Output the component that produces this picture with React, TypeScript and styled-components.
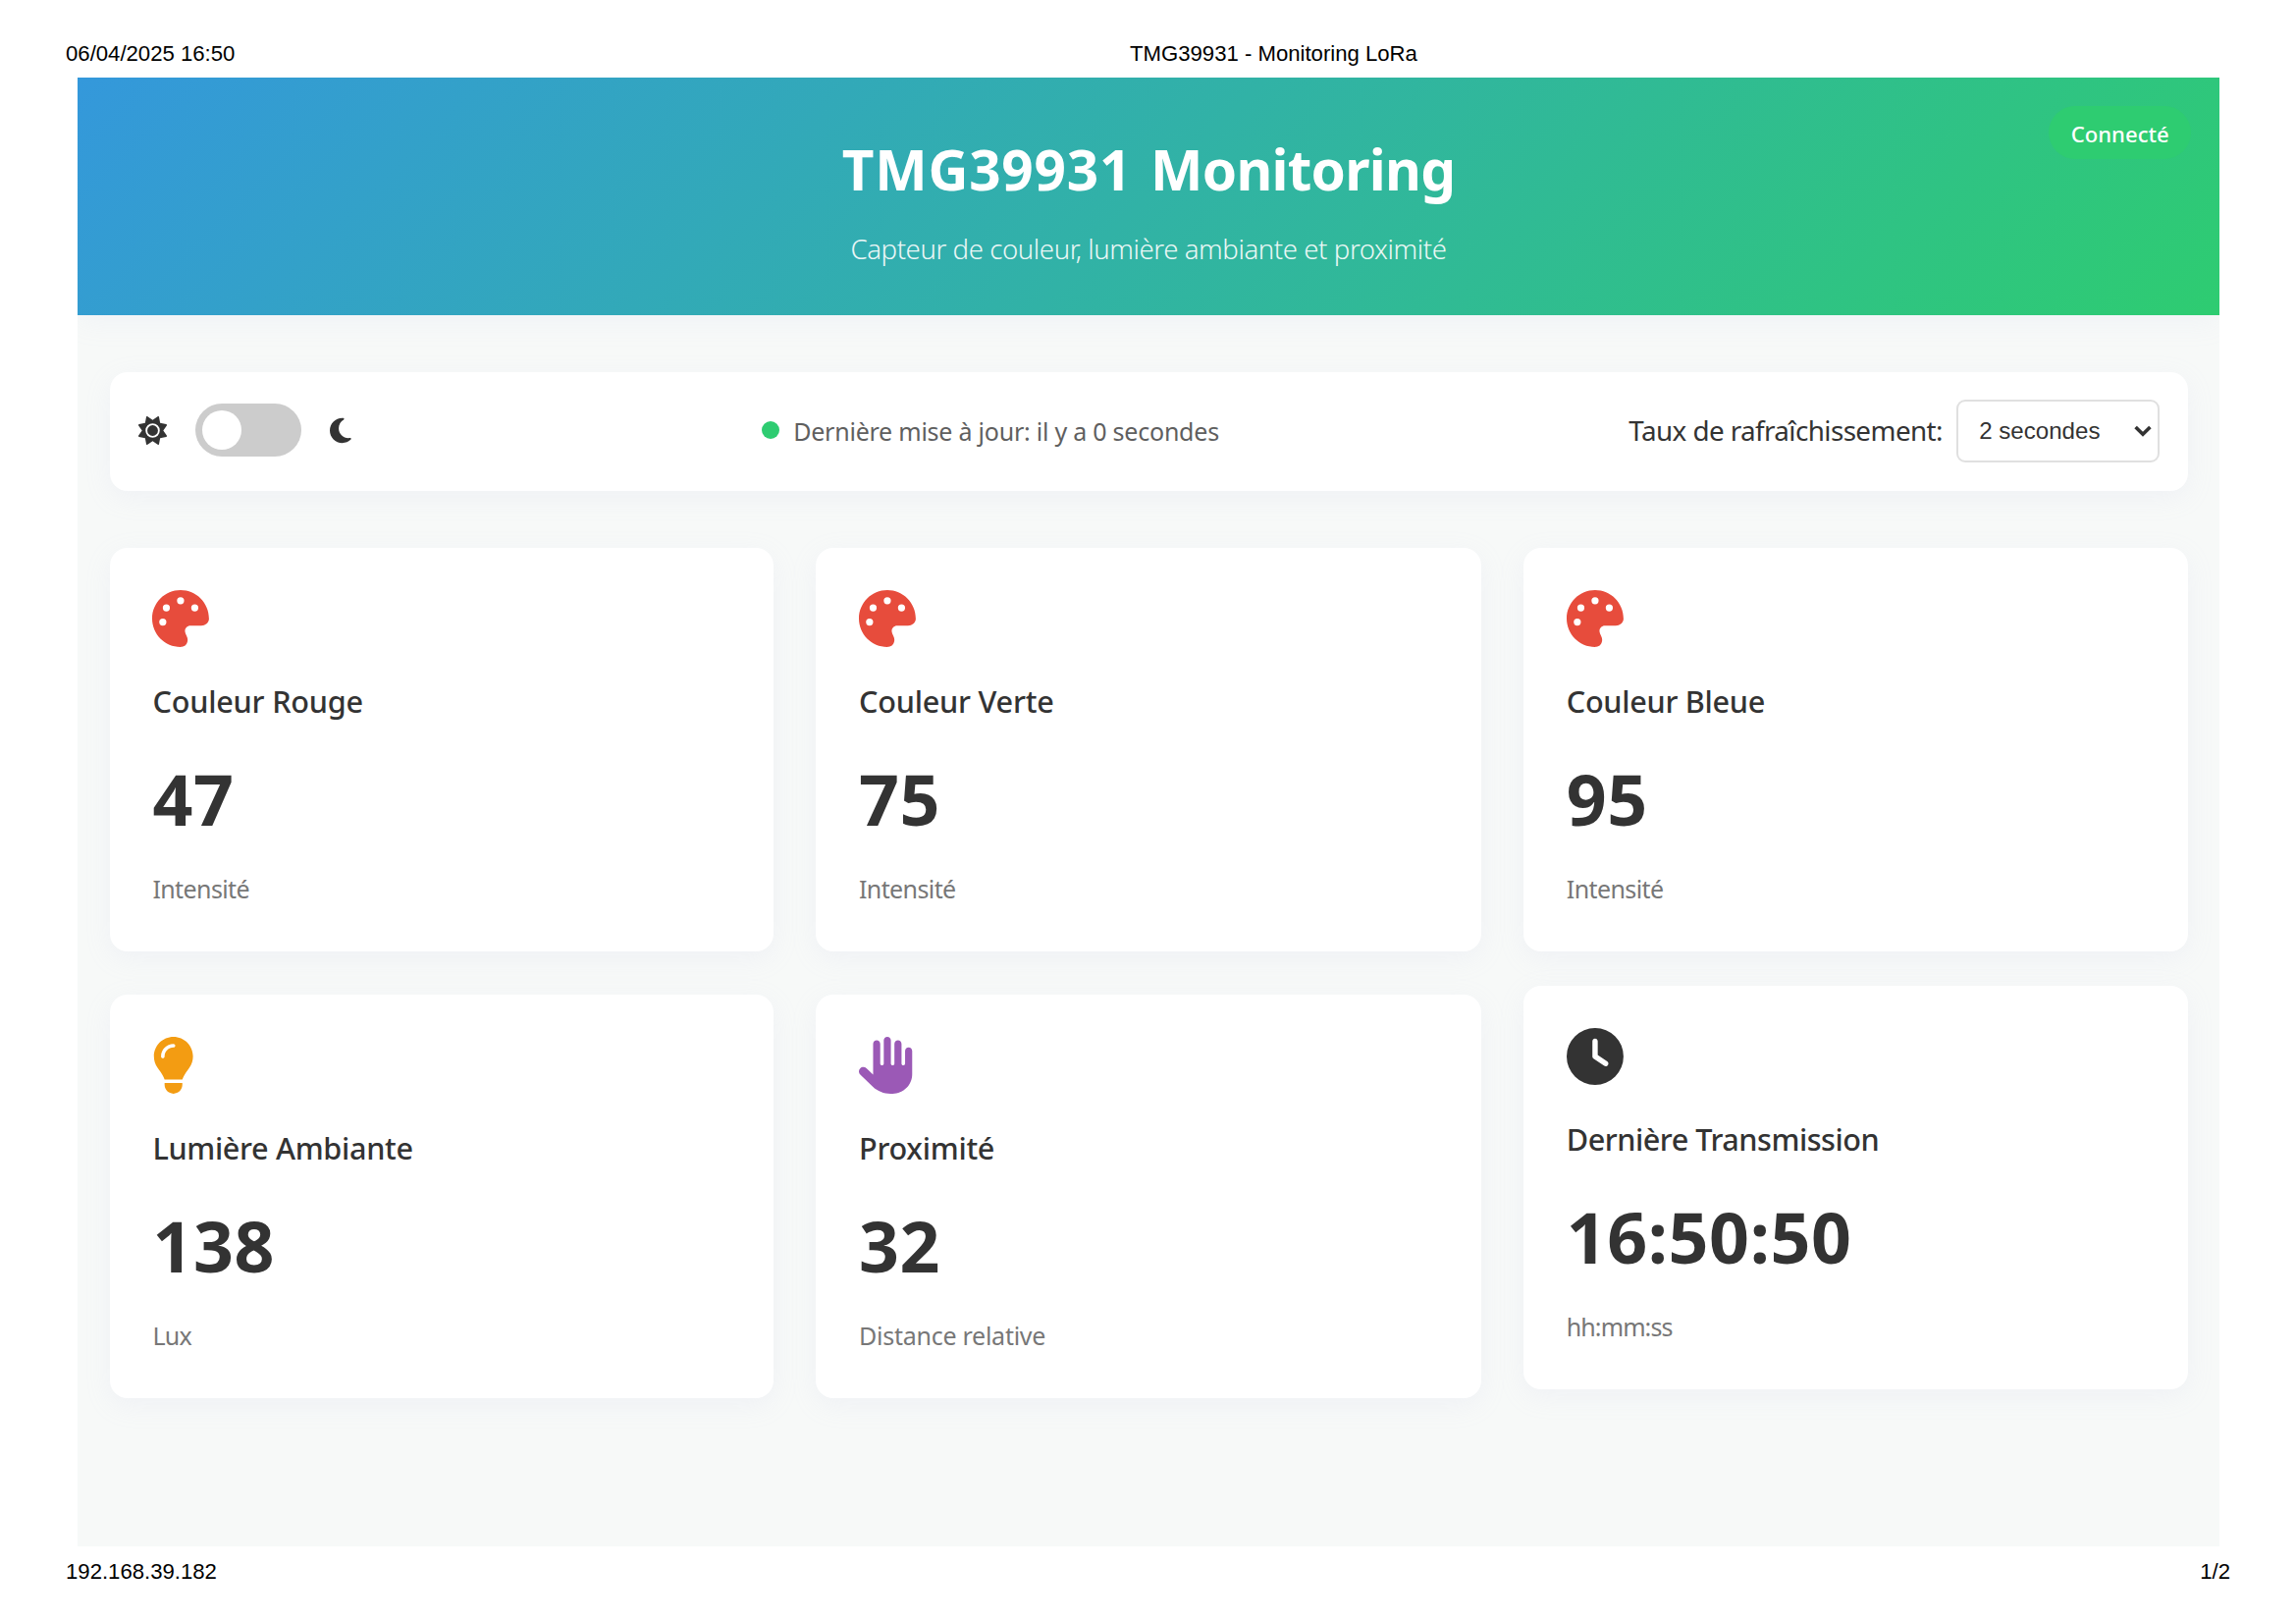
import React from "react";
import styled, { createGlobalStyle } from "styled-components";
import type { IconType } from "react-icons";
import { FaClock, FaHand, FaLightbulb, FaMoon, FaPalette, FaSun } from "react-icons/fa6";

const GlobalStyle = createGlobalStyle`
  *, *::before, *::after { box-sizing: border-box; }
  body {
    margin: 0;
    background: #fff;
    color: #333;
    font-family: "Noto Sans", "Open Sans", sans-serif;
  }
`;

const Sheet = styled.div`
  width: 2339px;
  height: 1653px;
  overflow: hidden;
  display: flex;
  flex-direction: column;
`;

const SheetHeader = styled.div`
  height: 79px;
  padding: 42px 67px 0;
  display: grid;
  grid-template-columns: 1084px auto;
  color: #000;
  font: 22.15px/26px "Liberation Sans", Arial, sans-serif;
`;

const SheetFooter = styled.div`
  padding: 13px 67px 0 67px;
  display: flex;
  justify-content: space-between;
  color: #000;
  font: 22.15px/26px "Liberation Sans", Arial, sans-serif;
`;

const Page = styled.div`
  width: 2182px;
  height: 1496px;
  margin-left: 79px;
  background: #f7f9f8;
  overflow: hidden;
`;

const Banner = styled.header`
  position: relative;
  height: 242px;
  padding-top: 53px;
  text-align: center;
  color: #fff;
  background: linear-gradient(135deg, #3498db, #2ecc71);
  box-shadow: 0 7px 27px rgba(190, 196, 232, 0.1);
`;

const BannerTitle = styled.h1`
  margin: 0 0 18.6px;
  font-size: 56.7px;
  font-weight: 700;
  line-height: 80px;
  letter-spacing: 0.75px;
  word-spacing: 3.5px;
`;

const TitleTail = styled.span`
  letter-spacing: -0.75px;
`;

const BannerSubtitle = styled.p`
  margin: 0;
  font-size: 27.6px;
  font-weight: 300;
  line-height: 44px;
  letter-spacing: -0.43px;
  opacity: 0.9;
`;

const ConnectionBadge = styled.div`
  position: absolute;
  top: 29px;
  right: 29px;
  width: 144.6px;
  height: 54.3px;
  padding-top: 1px;
  display: flex;
  align-items: center;
  justify-content: center;
  border-radius: 36px;
  background: #2ecc71;
  font-size: 22.1px;
  font-weight: 500;
`;

const Container = styled.main`
  padding: 57.5px 32.2px 0 32.8px;
`;

const surface = `
  background: #fff;
  border-radius: 18px;
  box-shadow: 0 7px 27px rgba(190, 196, 232, 0.13);
`;

const ControlBar = styled.section`
  ${surface}
  height: 121px;
  margin-bottom: 58.4px;
  padding: 0 29px;
  display: flex;
  align-items: center;
  justify-content: space-between;
`;

const ThemeControl = styled.div`
  display: flex;
  align-items: center;
  gap: 29px;
  margin-bottom: 1.4px;
  font-size: 29px;
`;

const MoonIcon = styled(FaMoon)`
  width: 0.75em;
`;

const Switch = styled.button`
  width: 108.6px;
  height: 54.3px;
  padding: 7.2px;
  border: 0;
  border-radius: 62px;
  background: #ccc;
`;

const Knob = styled.span`
  display: block;
  width: 39.9px;
  height: 39.9px;
  border-radius: 50%;
  background: #fff;
`;

const UpdateStatus = styled.div`
  display: flex;
  align-items: center;
  gap: 14.5px;
  color: #5f5f5f;
  font-size: 25px;
  letter-spacing: -0.23px;
`;

const StatusDot = styled.span`
  width: 18.1px;
  height: 18.1px;
  margin-bottom: 2px;
  border-radius: 50%;
  background: #2ecc71;
`;

const RefreshControl = styled.div`
  display: flex;
  align-items: center;
  gap: 14.5px;
  font-size: 27.8px;
  letter-spacing: -0.58px;
`;

const RefreshLabel = styled.span`
  padding-bottom: 2px;
`;

const RefreshSelect = styled.button`
  width: 206.4px;
  height: 63.3px;
  padding: 0 6px 0 20.8px;
  display: flex;
  align-items: center;
  justify-content: space-between;
  border: 2px solid #e0e0e0;
  border-radius: 9px;
  background: #fff;
  color: #333;
  font: 24.1px "Liberation Sans", Arial, sans-serif;
`;

const CardGrid = styled.section`
  display: grid;
  grid-template-columns: 676.2px 677.4px 676.6px;
  gap: 43.4px;
`;

const CardBox = styled.article<{ $raised?: boolean }>`
  ${surface}
  height: 411.5px;
  padding: 43px 43.6px;
  ${(p) => p.$raised && "transform: translateY(-9px);"}
`;

const CardIcon = styled.div<{ $color: string; $narrow?: boolean }>`
  height: 57.9px;
  margin-bottom: 32.3px;
  color: ${(p) => p.$color};
  font-size: 57.9px;

  svg {
    display: block;
    width: ${(p) => (p.$narrow ? "0.75em" : "1em")};
  }
`;

const CardTitle = styled.h2<{ $tracking: number }>`
  margin: 0 0 31.2px;
  font-size: 30.6px;
  font-weight: 500;
  line-height: 46px;
  letter-spacing: ${(p) => p.$tracking}px;
`;

const CardValue = styled.div`
  margin-bottom: 27.8px;
  font-size: 71.6px;
  font-weight: 700;
  line-height: 90px;
  letter-spacing: 0.6px;
`;

const CardUnit = styled.div<{ $tracking: number }>`
  color: #777;
  font-size: 25px;
  line-height: 38px;
  letter-spacing: ${(p) => p.$tracking}px;
`;

type Reading = {
  icon: IconType;
  narrowIcon?: boolean;
  color: string;
  title: string;
  titleTracking: number;
  value: string;
  unit: string;
  unitTracking: number;
  raised?: boolean;
};

const readings: Reading[] = [
  { icon: FaPalette, color: "#e74c3c", title: "Couleur Rouge", titleTracking: -0.18, value: "47", unit: "Intensité", unitTracking: -0.6 },
  { icon: FaPalette, color: "#e74c3c", title: "Couleur Verte", titleTracking: -0.2, value: "75", unit: "Intensité", unitTracking: -0.6 },
  { icon: FaPalette, color: "#e74c3c", title: "Couleur Bleue", titleTracking: -0.27, value: "95", unit: "Intensité", unitTracking: -0.6 },
  { icon: FaLightbulb, narrowIcon: true, color: "#f39c12", title: "Lumière Ambiante", titleTracking: -0.32, value: "138", unit: "Lux", unitTracking: -0.7 },
  { icon: FaHand, color: "#9b59b6", title: "Proximité", titleTracking: -0.25, value: "32", unit: "Distance relative", unitTracking: -0.25 },
  { icon: FaClock, color: "#333", title: "Dernière Transmission", titleTracking: -0.47, value: "16:50:50", unit: "hh:mm:ss", unitTracking: -0.9, raised: true },
];

function ReadingCard({ reading }: { reading: Reading }) {
  const Icon = reading.icon;
  return (
    <CardBox $raised={reading.raised}>
      <CardIcon $color={reading.color} $narrow={reading.narrowIcon}>
        <Icon />
      </CardIcon>
      <CardTitle $tracking={reading.titleTracking}>{reading.title}</CardTitle>
      <CardValue>{reading.value}</CardValue>
      <CardUnit $tracking={reading.unitTracking}>{reading.unit}</CardUnit>
    </CardBox>
  );
}

export default function App() {
  return (
    <Sheet>
      <GlobalStyle />
      <SheetHeader>
        <span>06/04/2025 16:50</span>
        <span>TMG39931 - Monitoring LoRa</span>
      </SheetHeader>
      <Page>
        <Banner>
          <BannerTitle>
            TMG39931 <TitleTail>Monitoring</TitleTail>
          </BannerTitle>
          <BannerSubtitle>Capteur de couleur, lumière ambiante et proximité</BannerSubtitle>
          <ConnectionBadge>Connecté</ConnectionBadge>
        </Banner>
        <Container>
          <ControlBar>
            <ThemeControl>
              <FaSun />
              <Switch aria-label="Thème">
                <Knob />
              </Switch>
              <MoonIcon />
            </ThemeControl>
            <UpdateStatus>
              <StatusDot />
              <span>Dernière mise à jour: il y a 0 secondes</span>
            </UpdateStatus>
            <RefreshControl>
              <RefreshLabel>Taux de rafraîchissement:</RefreshLabel>
              <RefreshSelect>
                <span>2 secondes</span>
                <svg width="18" height="12" viewBox="0 0 18 12" fill="none">
                  <path d="M1.6 2 9 9.2 16.4 2" stroke="#333" strokeWidth="3.6" />
                </svg>
              </RefreshSelect>
            </RefreshControl>
          </ControlBar>
          <CardGrid>
            {readings.map((reading) => (
              <ReadingCard key={reading.title} reading={reading} />
            ))}
          </CardGrid>
        </Container>
      </Page>
      <SheetFooter>
        <span>192.168.39.182</span>
        <span>1/2</span>
      </SheetFooter>
    </Sheet>
  );
}
